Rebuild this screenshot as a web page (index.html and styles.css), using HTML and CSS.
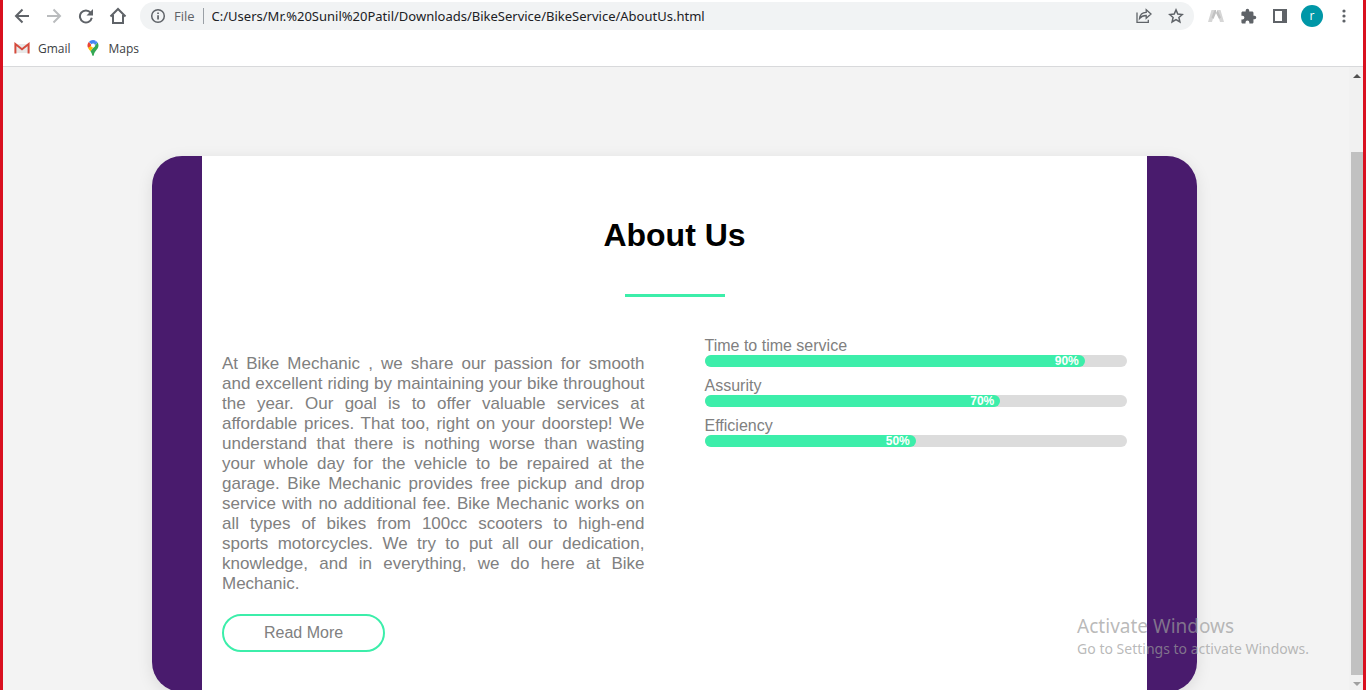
FILE: index.html
```html
<!DOCTYPE html>
<html lang="en">
<head>
<meta charset="utf-8">
<title>About Us</title>
<link rel="stylesheet" href="styles.css">
</head>
<body>
<div class="window">
  <header class="chrome">
    <div class="toolbar">
      <nav class="icon-row" aria-label="Navigation">
        <button class="icon-btn" aria-label="Back"><svg width="16" height="16" viewBox="0 0 16 16" fill="none" stroke="#5f6368" stroke-width="2"><path d="M15 8H2.500M8.500 1.500 2 8l6.500 6.500"/></svg></button>
        <button class="icon-btn" aria-label="Forward"><svg width="16" height="16" viewBox="0 0 16 16" fill="none" stroke="#babcbe" stroke-width="2"><path d="M1 8h12.500M7.500 1.500 14 8l-6.500 6.500"/></svg></button>
        <button class="icon-btn" aria-label="Reload"><svg width="16" height="16" viewBox="0 0 16 16"><path d="M12.600 4.600A6 6 0 1 0 13.800 9.700" fill="none" stroke="#5f6368" stroke-width="2"/><path d="M15 1v6.500H8.500z" fill="#5f6368"/></svg></button>
        <button class="icon-btn" aria-label="Home"><svg width="18" height="18" viewBox="0 0 18 18" fill="none" stroke="#5f6368" stroke-width="2"><path d="M1.500 9.500 9 2l7.500 7.500M4 8v8h10V8"/></svg></button>
      </nav>
      <div class="address">
        <svg width="16" height="16" viewBox="0 0 16 16"><circle cx="8" cy="8" r="6.300" fill="none" stroke="#5f6368" stroke-width="1.500"/><path d="M7.200 7.200h1.700v4.300H7.200zM7.200 4.400h1.700v1.600H7.200z" fill="#5f6368"/></svg>
        <span class="scheme">File</span>
        <input class="url" type="text" aria-label="Address" value="C:/Users/Mr.%20Sunil%20Patil/Downloads/BikeService/BikeService/AboutUs.html">
        <div class="icon-row">
          <button class="icon-btn" aria-label="Share"><svg width="18" height="18" viewBox="0 0 18 18" fill="none" stroke="#5f6368" stroke-width="1.300"><path d="M2 5.500v9.800h11.300v-2.500M4.500 11.500c.5-4.500 3-6 6.700-6.200V2.700L16 7l-4.800 4.200V8.500c-3 0-5 .8-6.700 3z"/></svg></button>
          <button class="icon-btn" aria-label="Bookmark"><svg width="16" height="16" viewBox="0 0 16 16" fill="none" stroke="#5f6368" stroke-width="1.500"><path d="m8 1.900 1.800 4.200 4.500.4-3.400 3 1 4.400L8 11.600l-3.900 2.300 1-4.400-3.400-3 4.500-.4z"/></svg></button>
        </div>
      </div>
      <div class="icon-row">
        <button class="icon-btn" aria-label="Extension"><svg width="16" height="16" viewBox="0 0 16 16"><path d="M3.500 2h3v3L4 14H0zM9.500 2h3L16 14h-4L9.500 5z" fill="#d6d6d6"/><path d="M6.500 2H8v3L5.500 11l-2-1.500zM8 5l1.500-3 3.500 7.500-2 1.500z" fill="#c2c2c2"/></svg></button>
        <button class="icon-btn" aria-label="Extensions"><svg width="17" height="17" viewBox="0 0 24 24"><path fill="#5f6368" d="M20.500 11H19V7c0-1.100-.9-2-2-2h-4V3.500a2.500 2.500 0 0 0-5 0V5H4c-1.100 0-2 .9-2 2v3.800h1.500a2.700 2.700 0 0 1 0 5.400H2V20c0 1.100.9 2 2 2h3.800v-1.500a2.700 2.700 0 0 1 5.400 0V22H17c1.100 0 2-.9 2-2v-4h1.500a2.500 2.500 0 0 0 0-5z"/></svg></button>
        <button class="icon-btn" aria-label="Side panel"><svg width="16" height="16" viewBox="0 0 16 16"><path fill="#5f6368" fill-rule="evenodd" d="M1 1h14v14H1zM3 3v10h7V3z"/></svg></button>
        <button class="icon-btn" aria-label="Profile"><span class="avatar">r</span></button>
        <button class="icon-btn" aria-label="Menu"><svg width="4" height="16" viewBox="0 0 4 16" fill="#5f6368"><circle cx="2" cy="3" r="1.600"/><circle cx="2" cy="8" r="1.600"/><circle cx="2" cy="13" r="1.600"/></svg></button>
      </div>
    </div>
    <nav class="bookmarks" aria-label="Bookmarks">
      <a class="bookmark" href="#"><svg width="16" height="16" viewBox="0 0 16 16"><path d="M2 4h12v9H2z" fill="#e8e8e8"/><path d="M1.400 13.500V4L8 9.200 14.600 4v9.500" fill="none" stroke="#d54b3d" stroke-width="2"/></svg>Gmail</a>
      <a class="bookmark" href="#"><svg width="16" height="16" viewBox="0 0 16 16"><path d="M8 0a5.500 5.500 0 0 0-4.200 2L8 5.500l3-4.600A5.500 5.500 0 0 0 8 0z" fill="#4285f4"/><path d="M3.800 2a5.500 5.500 0 0 0-.7 6L7 5.500z" fill="#ea4335"/><path d="M3.100 8c.6 1.200 1.500 2.200 2.400 3.300L12.200 2 9 3.500z" fill="#fbbc04"/><path d="M12.600 2.500C14 4.800 13.700 7.200 12 9.300c-1.600 2-2.700 3.300-3.200 5.700-.2 1.200-1.300 1.200-1.600 0-.3-1.500-.9-2.600-1.700-3.700z" fill="#34a853"/><path d="M11 .9c.7.300 1.200.9 1.600 1.600L9 6.500 8 5z" fill="#4285f4"/><circle cx="8" cy="5.500" r="2" fill="#fff"/></svg>Maps</a>
    </nav>
  </header>

  <div class="viewport">
    <main class="page">
      <section class="card">
        <h1 class="title">About Us</h1>
        <div class="rule"></div>
        <div class="columns">
          <div class="story">
            <p class="text">At Bike Mechanic , we share our passion for smooth and excellent riding by maintaining your bike throughout the year. Our goal is to offer valuable services at affordable prices. That too, right on your doorstep! We understand that there is nothing worse than wasting your whole day for the vehicle to be repaired at the garage. Bike Mechanic provides free pickup and drop service with no additional fee. Bike Mechanic works on all types of bikes from 100cc scooters to high-end sports motorcycles. We try to put all our dedication, knowledge, and in everything, we do here at Bike Mechanic.</p>
            <a class="read-more" href="#">Read More</a>
          </div>
          <div class="skills">
            <div class="skill"><div class="skill-name">Time to time service</div><div class="track"><div class="fill" style="width:90%">90%</div></div></div>
            <div class="skill"><div class="skill-name">Assurity</div><div class="track"><div class="fill" style="width:70%">70%</div></div></div>
            <div class="skill"><div class="skill-name">Efficiency</div><div class="track"><div class="fill" style="width:50%">50%</div></div></div>
          </div>
        </div>
      </section>
    </main>
    <div class="scrollbar">
      <svg width="8" height="4" viewBox="0 0 8 4"><path d="M0 4 4 0l4 4z" fill="#505050"/></svg>
      <div class="thumb"></div>
      <svg width="8" height="4" viewBox="0 0 8 4"><path d="m0 0 4 4 4-4z" fill="#a0a0a0"/></svg>
    </div>
  </div>

  <aside class="watermark">
    <div class="watermark-title">Activate Windows</div>
    <div class="watermark-text">Go to Settings to activate Windows.</div>
  </aside>
</div>
</body>
</html>
```
FILE: styles.css
```css
* { box-sizing: border-box; }

body {
  margin: 0;
  font-family: "Liberation Sans", Arial, sans-serif;
}

.window {
  position: relative;
  display: flex;
  flex-direction: column;
  height: 100vh;
  overflow: hidden;
  border: solid #d9101f;
  border-width: 0 3px;
  background: #fff;
}

.chrome {
  flex: none;
  border-bottom: 1px solid #d8d9db;
  font-family: "Open Sans", "Noto Sans", sans-serif;
  font-size: 12px;
  color: #3c4043;
}

.toolbar {
  display: flex;
  align-items: center;
  gap: 6px;
  height: 32px;
  padding: 0 3px;
}

.icon-row {
  display: flex;
  flex: none;
  align-items: center;
}

.icon-btn {
  display: flex;
  align-items: center;
  justify-content: center;
  width: 32px;
  height: 28px;
  padding: 0;
  border: 0;
  background: none;
  font: inherit;
}

.address {
  display: flex;
  flex: 1;
  align-items: center;
  gap: 8px;
  height: 28px;
  padding: 0 2px 0 10px;
  border-radius: 14px;
  background: #f1f3f4;
}

.scheme {
  padding-right: 8px;
  border-right: 1px solid #9aa0a6;
  line-height: 16px;
  font-size: 13px;
  color: #5f6368;
}

.url {
  flex: 1;
  min-width: 0;
  padding: 0;
  border: 0;
  outline: 0;
  background: none;
  font-family: "Noto Sans", "Open Sans", sans-serif;
  font-size: 13px;
  color: #202124;
}

.avatar {
  width: 22px;
  height: 22px;
  border-radius: 50%;
  background: #0097a7;
  line-height: 21px;
  text-align: center;
  color: #fff;
}

.bookmarks {
  display: flex;
  gap: 14px;
  height: 34px;
  padding: 0 11px 2px;
}

.bookmark {
  display: flex;
  align-items: center;
  gap: 8px;
  color: inherit;
  text-decoration: none;
}

.viewport {
  display: flex;
  flex: 1;
  min-height: 0;
  background: #f3f3f3;
}

.page {
  flex: 1;
  min-height: 0;
  padding: 89px 152px 0 149px;
  overflow: hidden;
}

.card {
  padding: 60px 20px 40px;
  border: solid #491b6d;
  border-width: 0 50px;
  border-radius: 30px;
  background: #fff;
  box-shadow: 0 4px 16px rgba(0, 0, 0, 0.1);
}

.title {
  margin: 0;
  font-size: 32px;
  line-height: 38px;
  text-align: center;
  color: #000;
}

.rule {
  width: 100px;
  height: 3px;
  margin: 40px auto;
  background: #3ceeaa;
}

.columns {
  display: grid;
  grid-template-columns: 1fr 1fr;
  gap: 60px;
  color: #808080;
}

.text {
  margin: 17px 0 20px;
  font-size: 17px;
  line-height: 20px;
  text-align: justify;
}

.read-more {
  display: inline-block;
  padding: 8px 40px;
  border: 2px solid #3ceeaa;
  border-radius: 20px;
  font-size: 16px;
  line-height: 18px;
  color: inherit;
  text-decoration: none;
}

.skill { margin-bottom: 8px; }

.skill-name {
  font-size: 16px;
  line-height: 18px;
}

.skill + .skill .skill-name { padding-top: 2px; }

.track {
  border-radius: 6px;
  background: #dcdcdc;
}

.fill {
  padding-right: 6px;
  border-radius: 6px;
  background: #3ceeaa;
  font-size: 12px;
  font-weight: bold;
  line-height: 12px;
  text-align: right;
  color: #fff;
}

.scrollbar {
  display: flex;
  flex: none;
  flex-direction: column;
  align-items: center;
  gap: 7px;
  width: 14px;
  padding: 7px 0 4px 2px;
  background: #f1f1f1;
}

.thumb {
  flex: 1;
  width: 12px;
  margin-top: 67px;
  background: #c1c1c1;
}

.watermark {
  position: absolute;
  right: 54px;
  bottom: 31px;
  font-family: "Noto Sans", "Open Sans", sans-serif;
  color: rgba(155, 155, 155, 0.7);
}

.watermark-title {
  font-size: 19px;
  line-height: 26px;
}

.watermark-text {
  font-size: 14px;
  line-height: 20px;
}
```
